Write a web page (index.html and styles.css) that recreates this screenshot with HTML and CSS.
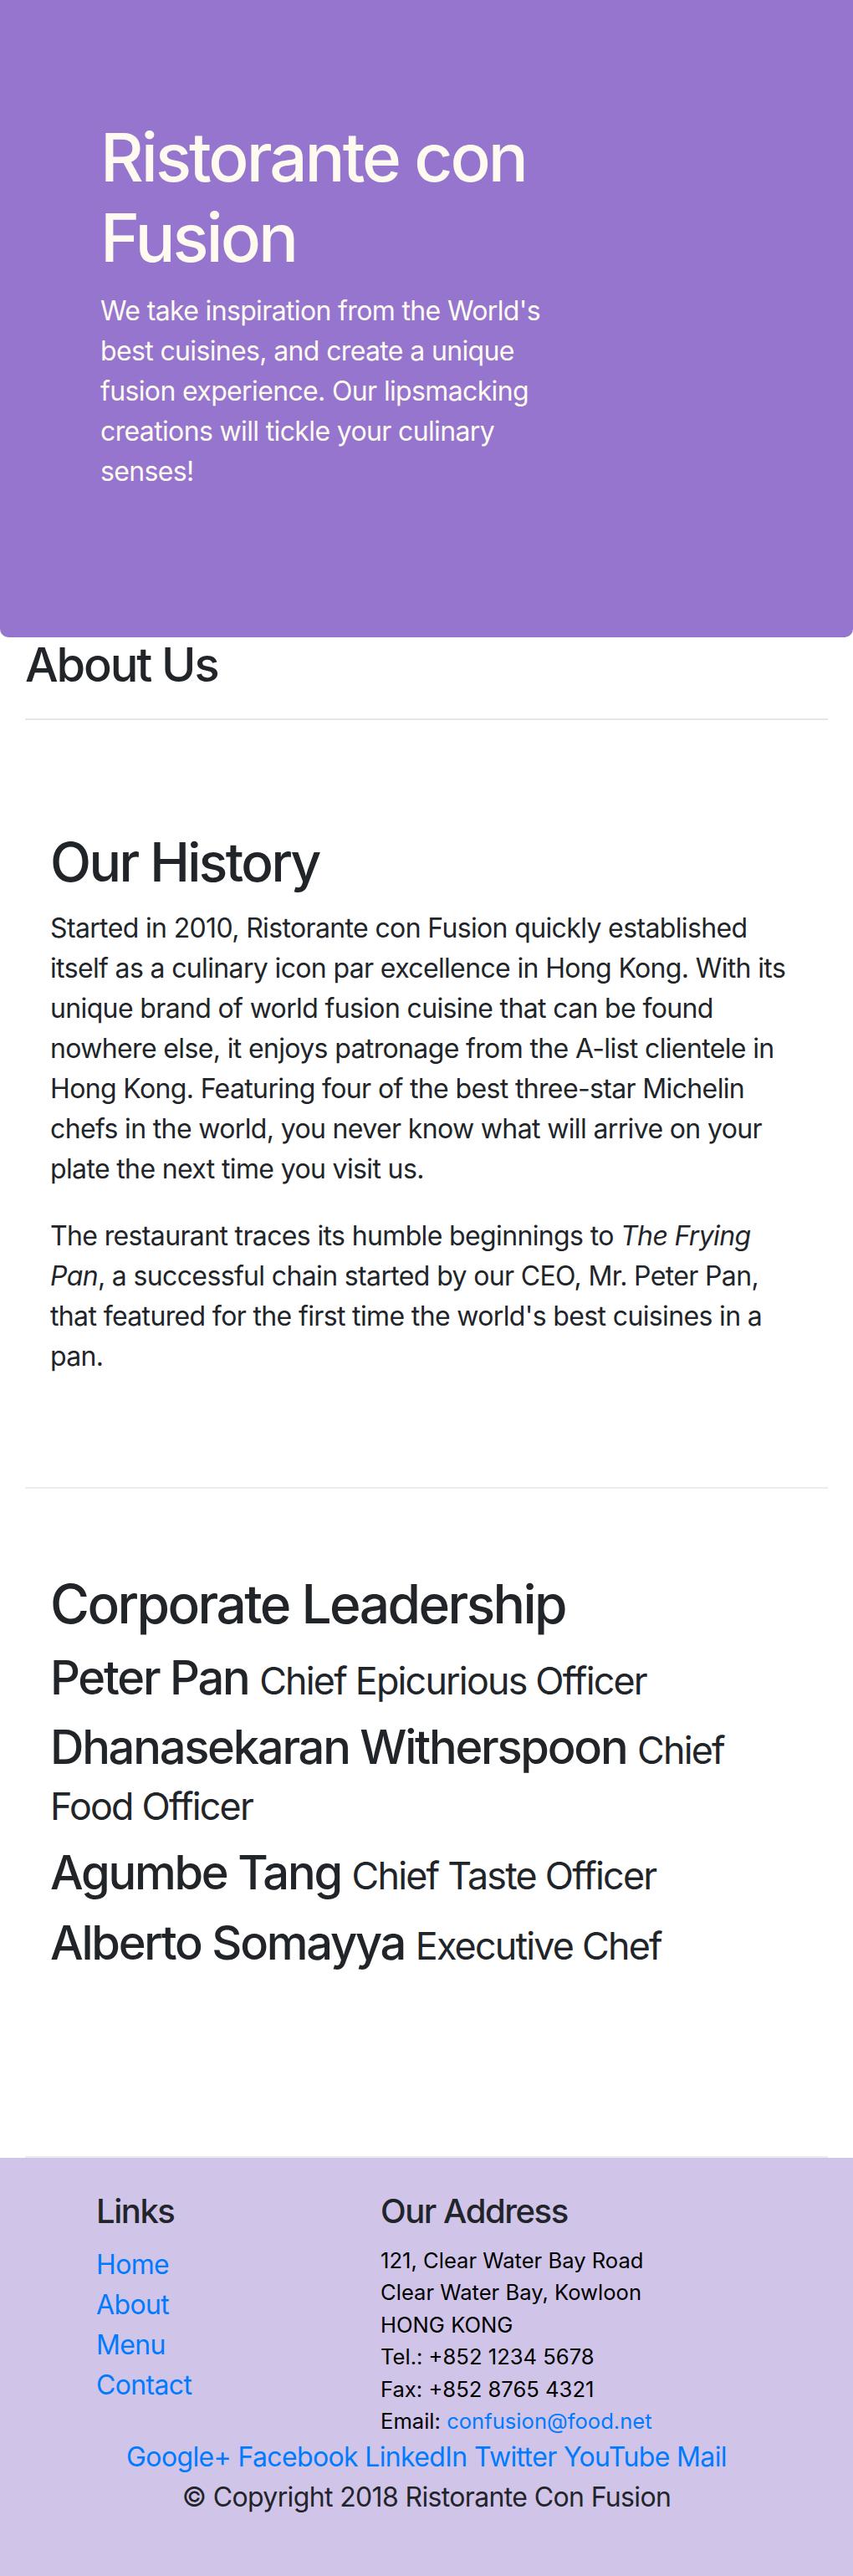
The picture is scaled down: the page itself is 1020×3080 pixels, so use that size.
FILE: index.html
```html
<!DOCTYPE html>
<html lang="en">
<head>
<meta charset="utf-8">
<title>Ristorante con Fusion: About Us</title>
<link rel="stylesheet" href="styles.css">
</head>
<body>
<header class="jumbotron">
  <div class="jumbotron-text">
    <h1 class="brand-title">Ristorante con Fusion</h1>
    <p class="brand-lead">We take inspiration from the World's best cuisines, and create a unique fusion experience. Our lipsmacking creations will tickle your culinary senses!</p>
  </div>
</header>

<main class="container">
  <div class="page-head">
    <h3 class="page-title">About Us</h3>
    <hr class="divider">
  </div>

  <section class="row-content">
    <div class="content-col">
      <h2 class="section-title">Our History</h2>
      <p class="body-text">Started in 2010, Ristorante con Fusion quickly established itself as a culinary icon par excellence in Hong Kong. With its unique brand of world fusion cuisine that can be found nowhere else, it enjoys patronage from the A-list clientele in Hong Kong. Featuring four of the best three-star Michelin chefs in the world, you never know what will arrive on your plate the next time you visit us.</p>
      <p class="body-text">The restaurant traces its humble beginnings to <em>The Frying Pan</em>, a successful chain started by our CEO, Mr. Peter Pan, that featured for the first time the world's best cuisines in a pan.</p>
    </div>
  </section>

  <section class="row-content">
    <div class="content-col">
      <h2 class="section-title">Corporate Leadership</h2>
      <h3 class="leader">Peter Pan <small class="role">Chief Epicurious Officer</small></h3>
      <h3 class="leader">Dhanasekaran Witherspoon <small class="role">Chief Food Officer</small></h3>
      <h3 class="leader">Agumbe Tang <small class="role">Chief Taste Officer</small></h3>
      <h3 class="leader">Alberto Somayya <small class="role">Executive Chef</small></h3>
    </div>
  </section>
</main>

<footer class="footer">
  <div class="footer-row">
    <div class="footer-links">
      <h5 class="footer-title">Links</h5>
      <ul class="link-list">
        <li><a class="link" href="#">Home</a></li>
        <li><a class="link" href="#">About</a></li>
        <li><a class="link" href="#">Menu</a></li>
        <li><a class="link" href="#">Contact</a></li>
      </ul>
    </div>
    <div class="footer-address">
      <h5 class="footer-title">Our Address</h5>
      <address class="address">
        121, Clear Water Bay Road<br>
        Clear Water Bay, Kowloon<br>
        HONG KONG<br>
        Tel.: +852 1234 5678<br>
        Fax: +852 8765 4321<br>
        Email: <a class="link" href="#">confusion@food.net</a>
      </address>
    </div>
  </div>
  <div class="social">
    <a class="link" href="#">Google+</a>
    <a class="link" href="#">Facebook</a>
    <a class="link" href="#">LinkedIn</a>
    <a class="link" href="#">Twitter</a>
    <a class="link" href="#">YouTube</a>
    <a class="link" href="#">Mail</a>
  </div>
  <p class="copyright">© Copyright 2018 Ristorante Con Fusion</p>
</footer>
</body>
</html>
```

FILE: styles.css
```css
* {
  box-sizing: border-box;
}

html, body {
  margin: 0;
  padding: 0;
}

body {
  font-family: Inter, "Noto Sans", "Liberation Sans", sans-serif;
  font-size: 32px;
  line-height: 1.5;
  letter-spacing: -0.02em;
  color: #212529;
  background: #ffffff;
}

h1, h2, h3, h5 {
  margin: 0 0 16px;
  font-weight: 500;
  line-height: 1.2;
  letter-spacing: -0.038em;
}

/* Jumbotron */
.jumbotron {
  background: #9575cd;
  color: #fffaf0;
  padding: 140px 60px 142px;
  border-radius: 0 0 10px 10px;
}

.jumbotron-text {
  margin-left: 60px;
  max-width: 560px;
}

.brand-title {
  font-size: 80px;
}

.brand-lead {
  margin: 0 0 32px;
}

/* Main */
.container {
  padding: 0 30px;
}

.page-title {
  font-size: 56px;
  margin: 0;
}

.divider {
  border: 0;
  border-top: 2px solid #e6e6e6;
  margin: 30px 0 32px;
  height: 0;
}

.row-content {
  padding: 100px 0;
  min-height: 800px;
  border-bottom: 2px solid #ececec;
}

.content-col {
  padding: 0 30px;
}

.section-title {
  font-size: 64px;
  letter-spacing: -0.04em;
}

.body-text {
  margin: 0 0 32px;
}

.leader {
  font-size: 56px;
  letter-spacing: -0.04em;
}

.role {
  font-size: 80%;
  font-weight: 400;
  letter-spacing: -0.04em;
}

/* Footer */
.footer {
  background: #d1c4e9;
  padding: 40px 0;
}

.footer-row {
  display: flex;
}

.footer-links {
  margin-left: 115px;
  width: 340px;
}

.footer-address {
  flex: 1;
}

.footer-title {
  font-size: 40px;
  letter-spacing: -0.036em;
}

.link-list {
  list-style: none;
  margin: 0;
  padding: 0;
}

.link {
  color: #007bff;
  text-decoration: none;
}

.address {
  font-style: normal;
  font-size: 25.6px;
  line-height: 38.4px;
  letter-spacing: 0;
  color: #000000;
}

.social {
  text-align: center;
}

.copyright {
  text-align: center;
  margin: 0 0 32px;
}
```
